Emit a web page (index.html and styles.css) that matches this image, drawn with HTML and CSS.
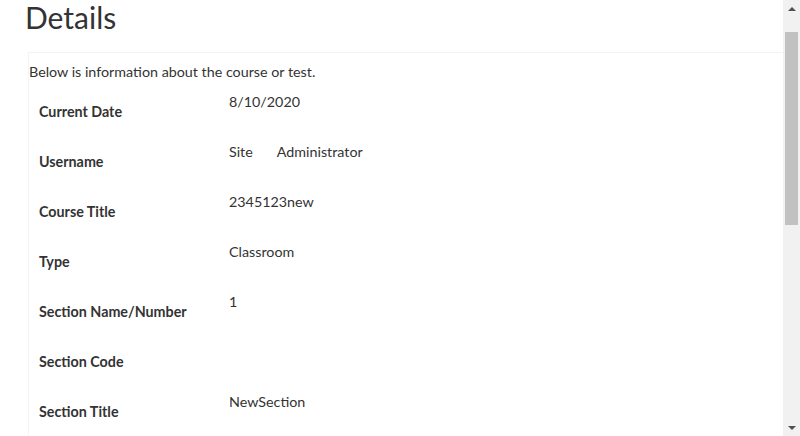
FILE: index.html
```html
<!DOCTYPE html>
<html lang="en">
<head>
<meta charset="utf-8">
<title>Details</title>
<link rel="stylesheet" href="styles.css">
</head>
<body>
<div class="viewport">
  <main class="page">
    <h1 class="title">Details</h1>
    <section class="card">
      <p class="intro">Below is information about the course or test.</p>
      <div class="rows">
        <div class="row"><div class="label">Current Date</div><div class="value">8/10/2020</div></div>
        <div class="row"><div class="label">Username</div><div class="value">Site<span class="gap"></span>Administrator</div></div>
        <div class="row"><div class="label">Course Title</div><div class="value">2345123new</div></div>
        <div class="row"><div class="label">Type</div><div class="value">Classroom</div></div>
        <div class="row"><div class="label">Section Name/Number</div><div class="value">1</div></div>
        <div class="row"><div class="label">Section Code</div><div class="value"></div></div>
        <div class="row"><div class="label">Section Title</div><div class="value">NewSection</div></div>
      </div>
    </section>
  </main>
  <div class="scrollbar" aria-hidden="true">
    <div class="sb-btn"><span class="arrow-up"></span></div>
    <div class="sb-track"><div class="sb-thumb"></div></div>
    <div class="sb-btn"><span class="arrow-down"></span></div>
  </div>
</div>
</body>
</html>
```
FILE: styles.css
```css
html, body {
  margin: 0;
  padding: 0;
  background: #fff;
  height: 436px;
  overflow: hidden;
}
body {
  font-family: Lato, "Open Sans", sans-serif;
  color: #333;
  font-size: 14.3px;
}
.viewport {
  display: flex;
  height: 436px;
}
.page {
  flex: 1;
  min-width: 0;
  overflow: hidden;
  padding: 0 0 0 25px;
}
.title {
  margin: 0;
  font-size: 30px;
  font-weight: 400;
  line-height: 34px;
  color: #333;
}
.card {
  margin: 18px 0 0 3px;
  border-top: 1px solid #f4f4f4;
  border-left: 1px solid #f4f4f4;
  padding: 9px 0 0 0;
}
.intro {
  margin: 0;
  line-height: 20px;
}
.rows {
  margin-top: 10px;
  display: flex;
  flex-direction: column;
}
.row {
  display: grid;
  grid-template-columns: 200px 1fr;
  height: 50px;
}
.label {
  padding: 10px 0 0 10px;
  font-weight: 700;
  line-height: 20px;
}
.value {
  line-height: 20px;
}
.gap {
  display: inline-block;
  width: 24px;
}
.scrollbar {
  width: 17px;
  flex: none;
  background: #f1f1f1;
  display: flex;
  flex-direction: column;
}
.sb-btn {
  height: 17px;
  display: flex;
  align-items: center;
  justify-content: center;
}
.arrow-up {
  width: 0;
  height: 0;
  border-left: 4px solid transparent;
  border-right: 4px solid transparent;
  border-bottom: 4px solid #505050;
}
.arrow-down {
  width: 0;
  height: 0;
  border-left: 4px solid transparent;
  border-right: 4px solid transparent;
  border-top: 4px solid #505050;
}
.sb-track {
  flex: 1;
  padding: 15px 2px 0 2px;
}
.sb-thumb {
  height: 193px;
  background: #c1c1c1;
}
```
